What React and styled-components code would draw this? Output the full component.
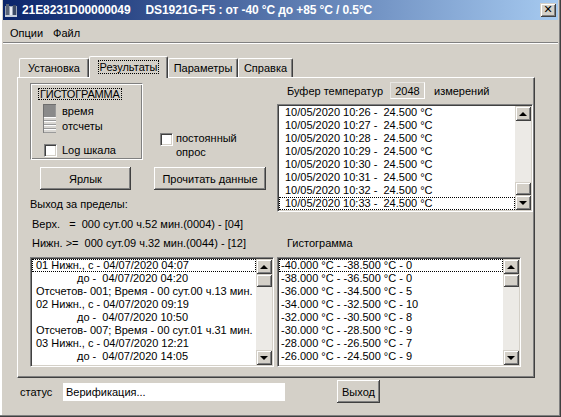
import React from 'react';
import styled, { createGlobalStyle, css } from 'styled-components';

const Global = createGlobalStyle`
  html, body { margin: 0; padding: 0; background: #D4D0C8; }
  body { font-family: "Liberation Sans", Arial, sans-serif; font-size: 11px; color: #000; }
  * { box-sizing: border-box; }
  #root { width: 561px; height: 417px; }
`;

const raised = css`
  background: #D4D0C8;
  box-shadow: inset 1px 1px #D4D0C8, inset -1px -1px #404040, inset 2px 2px #fff, inset -2px -2px #808080;
`;

const Window = styled.div`
  width: 561px;
  height: 417px;
  background: #D4D0C8;
  padding: 0 3px 3px 3px;
  box-shadow: inset -1px -1px #404040, inset -2px -2px #808080, inset 2px 0 #fff;
  display: flex;
  flex-direction: column;
  overflow: hidden;
`;

const TitleBar = styled.div`
  height: 20px;
  flex: none;
  background: linear-gradient(to right, #0A246A, #A6CAF0);
  display: flex;
  align-items: center;
  padding: 0 2px 0 1px;
  color: #fff;
  font-weight: bold;
  font-size: 12px;
  white-space: nowrap;
`;

const TitleIcon = styled.svg`
  width: 14px;
  height: 15px;
  flex: none;
  margin-right: 4px;
`;

const TitleText = styled.span`
  margin-left: ${p => p.$gap || 0}px;
  letter-spacing: -0.1px;
`;

const Spacer = styled.div`
  flex: 1;
`;

const CloseBtn = styled.div`
  ${raised};
  width: 16px;
  height: 14px;
  display: flex;
  align-items: center;
  justify-content: center;
  color: #000;
  font-family: "DejaVu Sans", sans-serif;
  font-weight: bold;
  font-size: 11px;
  line-height: 1;
  padding-bottom: 1px;
`;

const MenuBar = styled.div`
  height: 22px;
  flex: none;
  display: flex;
  align-items: center;
  padding-left: 2px;
  padding-top: 3px;
`;

const MenuItem = styled.span`
  padding: 0 5px;
`;

const Separator = styled.div`
  height: 2px;
  flex: none;
  border-top: 1px solid #808080;
  border-bottom: 1px solid #fff;
`;

const Client = styled.div`
  flex: 1;
  display: flex;
  flex-direction: column;
  padding: 12px 0 0 14px;
`;

const TabStrip = styled.div`
  display: flex;
  align-items: flex-end;
  height: 22px;
  padding-left: 2px;
  margin-bottom: -1px;
  position: relative;
  z-index: 1;
`;

const Tab = styled.div`
  width: ${p => p.$w}px;
  height: ${p => (p.$sel ? 22 : 19)}px;
  margin-bottom: ${p => (p.$sel ? 0 : 1)}px;
  background: #D4D0C8;
  border-top: 1px solid #fff;
  border-left: 1px solid #fff;
  border-right: 1px solid #404040;
  border-top-left-radius: 2px;
  border-top-right-radius: 2px;
  box-shadow: inset -1px 0 #808080;
  display: flex;
  align-items: center;
  justify-content: center;
  padding-bottom: ${p => (p.$sel ? 2 : 0)}px;
  white-space: nowrap;
`;

const FocusText = styled.span`
  outline: 1px dotted #000;
  outline-offset: 0;
  padding: 0 1px;
  line-height: 12px;
`;

const Panel = styled.div`
  width: 518px;
  height: 301px;
  flex: none;
  border-top: 1px solid #fff;
  border-left: 1px solid #fff;
  border-right: 1px solid #404040;
  border-bottom: 1px solid #404040;
  box-shadow: inset -1px -1px #808080;
  padding: 5px 1px 10px 12px;
  display: grid;
  grid-template-columns: 244px 256px;
  grid-template-rows: 174px 110px;
  column-gap: 3px;
`;

const Column = styled.div`
  display: flex;
  flex-direction: column;
`;

const TopRow = styled.div`
  display: flex;
  align-items: flex-start;
`;

const GroupBox = styled.div`
  width: 113px;
  height: 77px;
  border: 1px solid;
  border-color: #808080 #fff #fff #808080;
  box-shadow: inset 1px 1px #fff, inset -1px -1px #808080;
  display: flex;
  flex-direction: column;
  align-items: flex-start;
`;

const GroupLabel = styled.div`
  margin: 4px 0 0 7px;
  height: 12px;
  line-height: 11px;
  padding: 0 1px;
  border: 1px dotted #000;
  letter-spacing: -0.2px;
`;

const SliderRow = styled.div`
  display: flex;
  margin: 4px 0 0 12px;
`;

const Slider = styled.div`
  width: 13px;
  height: 29px;
  display: flex;
  flex-direction: column;
`;

const SliderTrack = styled.div`
  height: 13px;
  background: #8a8a8a;
  box-shadow: inset 1px 1px #6e6e6e, inset -1px 0 #9a9a9a;
`;

const SliderThumb = styled.div`
  flex: 1;
  background: repeating-linear-gradient(to bottom, #fff 0 1px, #d8d6d2 1px 3px, #9a9a9a 3px 4px);
  box-shadow: inset 1px 0 #808080;
`;

const SliderLabels = styled.div`
  margin-left: 6px;
  line-height: 15px;
  display: flex;
  flex-direction: column;
`;

const CheckRow = styled.div`
  display: flex;
  align-items: flex-start;
  margin: ${p => p.$m || '0'};
`;

const CheckBox = styled.div`
  width: 13px;
  height: 13px;
  flex: none;
  background: #fff;
  border: 1px solid;
  border-color: #808080 #fff #fff #808080;
  box-shadow: inset 1px 1px #404040, inset -1px -1px #D4D0C8;
  margin-top: ${p => p.$mt || 0}px;
`;

const CheckText = styled.div`
  margin-left: ${p => p.$ml}px;
  line-height: ${p => p.$lh || 13}px;
`;

const ButtonRow = styled.div`
  display: flex;
  gap: 23px;
  margin: 7px 0 0 10px;
`;

const Button = styled.div`
  background: #D4D0C8;
  width: ${p => p.$w}px;
  height: 23px;
  flex: none;
  display: flex;
  align-items: center;
  justify-content: center;
  box-shadow: inset -1px -1px #404040, inset 1px 1px #fff, inset -2px -2px #808080;
  white-space: nowrap;
`;

const TextLine = styled.div`
  line-height: 13px;
  margin: ${p => p.$mt || 0}px 0 0 ${p => p.$ml || 0}px;
  white-space: pre;
`;

const BufferRow = styled.div`
  display: flex;
  align-items: center;
  height: 17px;
  margin-top: -1px;
`;

const BufferLabel = styled.div`
  width: 113px;
  padding: 1px 0 0 10px;
`;

const BufferBox = styled.div`
  width: 35px;
  height: 17px;
  display: flex;
  align-items: center;
  justify-content: center;
  padding-top: 1px;
  border: 1px solid;
  border-color: #e8e6e2 #fff #fff #e8e6e2;
  background: #D4D0C8;
`;

const BufferUnit = styled.div`
  margin-left: 9px;
  padding-top: 1px;
`;

const ListBox = styled.div`
  width: ${p => p.$w}px;
  height: ${p => p.$h}px;
  margin-top: ${p => p.$mt || 0}px;
  flex: none;
  background: #fff;
  border: 1px solid;
  border-color: #808080 #fff #fff #808080;
  box-shadow: inset 1px 1px #404040, inset -1px -1px #D4D0C8;
  padding: 1px;
  display: flex;
`;

const Items = styled.div`
  flex: 1;
  min-width: 0;
  display: flex;
  flex-direction: column;
  overflow: hidden;
`;

const Item = styled.div`
  height: 13px;
  line-height: 13px;
  padding-left: ${p => p.$pad + (p.$indent || 0)}px;
  white-space: pre;
  overflow: hidden;
  ${p => p.$focus && css`
    outline: 1px dotted #000;
    outline-offset: -1px;
  `}
`;

const ScrollBar = styled.div`
  width: 16px;
  flex: none;
  display: flex;
  flex-direction: column;
  background: #ECEAE6;
`;

const ArrowBtn = styled.div`
  ${raised};
  height: 15px;
  flex: none;
  display: flex;
  align-items: center;
  justify-content: center;
`;

const Triangle = styled.span`
  width: 0;
  height: 0;
  border-left: 4px solid transparent;
  border-right: 4px solid transparent;
  ${p => (p.$down ? 'border-top: 4px solid #000;' : 'border-bottom: 4px solid #000;')}
`;

const Track = styled.div`
  flex: 1;
  display: flex;
  flex-direction: column;
  justify-content: ${p => (p.$bottom ? 'flex-end' : 'flex-start')};
`;

const Thumb = styled.div`
  ${raised};
  height: 13px;
`;

const StatusRow = styled.div`
  display: flex;
  align-items: center;
  height: 23px;
  margin-top: 2px;
`;

const StatusLabel = styled.div`
  width: 46px;
  padding: 1px 0 0 3px;
`;

const StatusInput = styled.div`
  width: 222px;
  height: 18px;
  background: #fff;
  padding-left: 3px;
  line-height: 19px;
`;

const ExitButton = styled(Button)`
  margin-left: 52px;
`;

function List({ w, h, mt, pad, rows, focus, thumbBottom }) {
  return (
    <ListBox $w={w} $h={h} $mt={mt}>
      <Items>
        {rows.map((r, i) => (
          <Item key={i} $pad={pad} $indent={r.indent} $focus={i === focus}>
            {r.text}
          </Item>
        ))}
      </Items>
      <ScrollBar>
        <ArrowBtn><Triangle /></ArrowBtn>
        <Track $bottom={thumbBottom}><Thumb /></Track>
        <ArrowBtn><Triangle $down /></ArrowBtn>
      </ScrollBar>
    </ListBox>
  );
}

const bufferRows = [26, 27, 28, 29, 30, 31, 32, 33].map(m => ({
  text: `10/05/2020 10:${m} -  24.500 °C`,
}));

const eventRows = [
  { text: '01 Нижн., с - 04/07/2020 04:07' },
  { text: 'до -  04/07/2020 04:20', indent: 41 },
  { text: 'Отсчетов- 001; Время - 00 сут.00 ч.13 мин.' },
  { text: '02 Нижн., с - 04/07/2020 09:19' },
  { text: 'до -  04/07/2020 10:50', indent: 41 },
  { text: 'Отсчетов- 007; Время - 00 сут.01 ч.31 мин.' },
  { text: '03 Нижн., с - 04/07/2020 12:21' },
  { text: 'до -  04/07/2020 14:05', indent: 41 },
];

const histRows = [
  '-40.000 °C - -38.500 °C - 0',
  '-38.000 °C - -36.500 °C - 0',
  '-36.000 °C - -34.500 °C - 5',
  '-34.000 °C - -32.500 °C - 10',
  '-32.000 °C - -30.500 °C - 8',
  '-30.000 °C - -28.500 °C - 9',
  '-28.000 °C - -26.500 °C - 7',
  '-26.000 °C - -24.500 °C - 9',
].map(t => ({ text: t }));

export default function App() {
  return (
    <>
      <Global />
      <Window>
        <TitleBar>
          <TitleIcon viewBox="0 0 14 15">
            <rect x="1" y="3" width="12" height="11" fill="#9aa4b4" />
            <rect x="2" y="1" width="3" height="13" fill="#5a6478" />
            <rect x="6" y="4" width="2" height="10" fill="#e8ecf4" />
            <rect x="9" y="2" width="3" height="12" fill="#3c4a66" />
            <rect x="1" y="12" width="12" height="2" fill="#c8d0dc" />
          </TitleIcon>
          <TitleText>21E8231D00000049</TitleText>
          <TitleText $gap={15}>DS1921G-F5 : от -40 °C до +85 °C / 0.5°C</TitleText>
          <Spacer />
          <CloseBtn>✕</CloseBtn>
        </TitleBar>
        <MenuBar>
          <MenuItem>Опции</MenuItem>
          <MenuItem>Файл</MenuItem>
        </MenuBar>
        <Separator />
        <Client>
          <TabStrip>
            <Tab $w={70}>Установка</Tab>
            <Tab $w={79} $sel><FocusText>Результаты</FocusText></Tab>
            <Tab $w={70}>Параметры</Tab>
            <Tab $w={55}>Справка</Tab>
          </TabStrip>
          <Panel>
            <Column>
              <TopRow>
                <GroupBox>
                  <GroupLabel>ГИСТОГРАММА</GroupLabel>
                  <SliderRow>
                    <Slider>
                      <SliderTrack />
                      <SliderThumb />
                    </Slider>
                    <SliderLabels>
                      <span>время</span>
                      <span>отсчеты</span>
                    </SliderLabels>
                  </SliderRow>
                  <CheckRow $m="10px 0 0 13px">
                    <CheckBox />
                    <CheckText $ml={5}>Log шкала</CheckText>
                  </CheckRow>
                </GroupBox>
                <CheckRow $m="48px 0 0 17px">
                  <CheckBox $mt={2} />
                  <CheckText $ml={3} $lh={14}>постоянный<br />опрос</CheckText>
                </CheckRow>
              </TopRow>
              <ButtonRow>
                <Button $w={91}>Ярлык</Button>
                <Button $w={112}>Прочитать данные</Button>
              </ButtonRow>
              <TextLine $mt={8}>Выход за пределы:</TextLine>
              <TextLine $mt={7} $ml={2}>{'Верх.   =  000 сут.00 ч.52 мин.(0004) - [04]'}</TextLine>
              <TextLine $mt={6} $ml={2}>{'Нижн. >=  000 сут.09 ч.32 мин.(0044) - [12]'}</TextLine>
            </Column>
            <Column>
              <BufferRow>
                <BufferLabel>Буфер температур</BufferLabel>
                <BufferBox>2048</BufferBox>
                <BufferUnit>измерений</BufferUnit>
              </BufferRow>
              <List w={256} h={108} mt={5} pad={6} rows={bufferRows} focus={7} thumbBottom />
              <TextLine $mt={25} $ml={10}>Гистограмма</TextLine>
            </Column>
            <List w={244} h={110} pad={4} rows={eventRows} focus={0} />
            <List w={244} h={110} pad={2} rows={histRows} focus={0} />
          </Panel>
          <StatusRow>
            <StatusLabel>статус</StatusLabel>
            <StatusInput>Верификация...</StatusInput>
            <ExitButton $w={43}>Выход</ExitButton>
          </StatusRow>
        </Client>
      </Window>
    </>
  );
}
